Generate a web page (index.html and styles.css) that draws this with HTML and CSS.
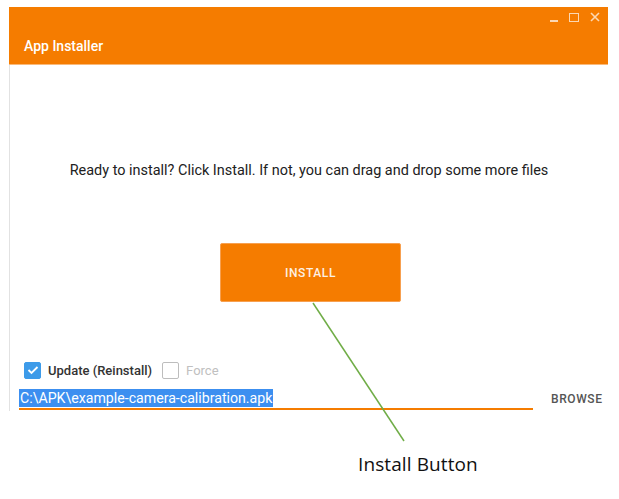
FILE: index.html
```html
<!DOCTYPE html>
<html>
<head>
<meta charset="utf-8">
<link rel="stylesheet" href="styles.css">
</head>
<body>
<div class="window">
  <div class="header">
    <div class="controls">
      <span class="ctl ctl-min"></span>
      <span class="ctl ctl-max"></span>
      <svg class="ctl-close" width="10" height="10" viewBox="0 0 10 10"><path d="M1 1L9 9M9 1L1 9" stroke="#fbd7b3" stroke-width="1.6"/></svg>
    </div>
    <div class="title">App Installer</div>
  </div>
  <div class="body">
    <p class="msg">Ready to install? Click Install. If not, you can drag and drop some more files</p>
    <div class="btn-row"><button class="install">INSTALL</button></div>
    <div class="checks">
      <span class="cb checked"><svg width="12" height="10" viewBox="0 0 12 10"><path d="M1.5 5L4.5 8L10.5 2" stroke="#fff" stroke-width="1.8" fill="none"/></svg></span>
      <span class="cb-label">Update (Reinstall)</span>
      <span class="cb"></span>
      <span class="cb-label muted">Force</span>
    </div>
    <div class="path-row">
      <div class="path-field"><span class="sel">C:\APK\example-camera-calibration.apk</span></div>
      <span class="browse">BROWSE</span>
    </div>
  </div>
</div>
<svg class="pointer" width="619" height="499" viewBox="0 0 619 499"><line x1="313" y1="303" x2="404" y2="441" stroke="#70ad47" stroke-width="1.5"/></svg>
<div class="callout">Install Button</div>
</body>
</html>
```
FILE: styles.css
```css
html, body { margin: 0; padding: 0; background: #fff; }
body { width: 619px; height: 499px; position: relative; overflow: hidden; font-family: Roboto, "Liberation Sans", sans-serif; }
.window { margin: 7px 0 0 9px; width: 599px; }
.header { background: #f57c00; height: 58px; border-bottom: 1px solid #f9b97a; box-sizing: border-box; position: relative; }
.controls { position: absolute; right: 8px; top: 5px; display: flex; align-items: center; gap: 11px; height: 10px; }
.ctl-min { width: 8px; height: 2px; background: #fbd7b3; margin-top: 8px; }
.ctl-max { width: 8px; height: 7px; border: 1.5px solid #fbd7b3; }
.title { color: #fff; font-size: 14px; font-weight: 500; padding: 31px 0 0 15px; line-height: 16px; }
.body { border-left: 1.5px solid #e2e2e2; height: 346px; box-sizing: border-box; }
.msg { margin: 0; padding-top: 97px; text-align: center; font-size: 14.45px; line-height: 17px; color: #212121; }
.btn-row { display: flex; padding-left: 210px; margin-top: 64px; }
.install { width: 181px; height: 59px; background: #f57c00; border: 1px solid #f7a050; border-radius: 2px; color: #fdf0e4; font-family: Roboto, sans-serif; font-size: 12px; font-weight: 500; letter-spacing: 0.6px; padding: 0; }
.checks { display: flex; align-items: center; margin-top: 59px; padding-left: 14px; height: 18px; }
.cb { width: 17px; height: 17px; border: 1.5px solid #bdbdbd; border-radius: 2px; box-sizing: border-box; display: inline-flex; align-items: center; justify-content: center; margin-right: 7px; }
.cb.checked { background: #3d9be9; border-color: #3d9be9; }
.cb-label { font-size: 13px; font-weight: 500; color: #333; margin-right: 10px; }
.cb-label.muted { color: #c0c0c0; font-weight: 400; }
.path-row { display: flex; align-items: center; margin-top: 10px; padding-left: 9px; }
.path-field { width: 514px; border-bottom: 2px solid #f57c00; height: 21px; box-sizing: border-box; display: flex; align-items: flex-start; }
.sel { background: #3c8ff0; color: #fff; font-size: 14.15px; line-height: 18px; padding: 0 1px; }
.browse { margin-left: 18px; font-size: 12px; font-weight: 500; color: #555; letter-spacing: 0.6px; margin-top: -2px; }
.pointer { position: absolute; left: 0; top: 0; }
.callout { position: absolute; left: 358px; top: 451px; font-family: "Open Sans", sans-serif; font-size: 19px; color: #111; letter-spacing: 0.1px; }
```
